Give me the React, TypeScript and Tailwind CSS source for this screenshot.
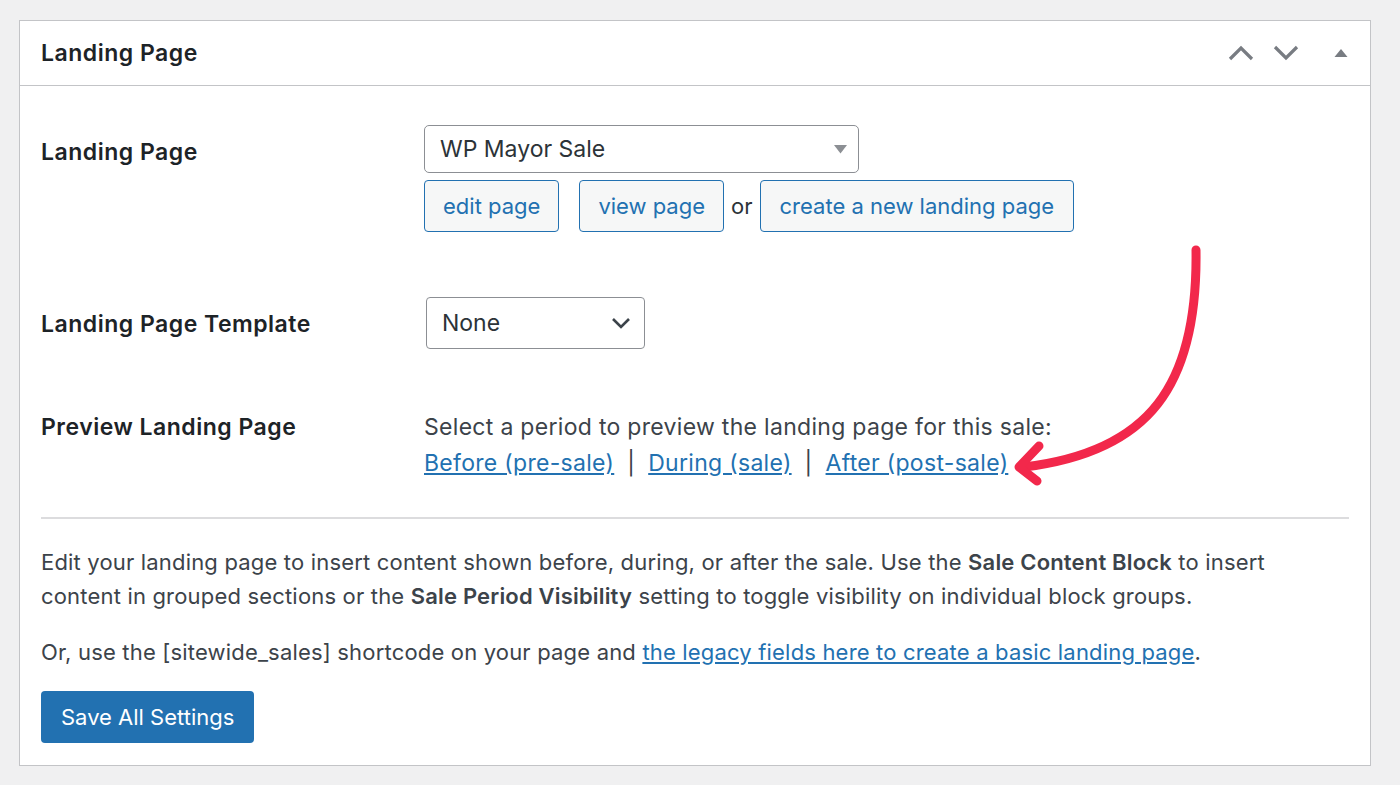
import React from 'react';

const font = { fontFamily: 'Inter, "Noto Sans", sans-serif' };

const ChevronUp = () => (
  <svg width="26" height="16" viewBox="0 0 26 16" fill="none">
    <path d="M2 14 L13 3 L24 14" stroke="#787c82" strokeWidth="3.2" />
  </svg>
);

const ChevronDown = () => (
  <svg width="26" height="16" viewBox="0 0 26 16" fill="none">
    <path d="M2 2 L13 13 L24 2" stroke="#787c82" strokeWidth="3.2" />
  </svg>
);

const Arrow = () => (
  <svg
    className="absolute left-0 top-0 pointer-events-none"
    width="1400"
    height="785"
    viewBox="0 0 1400 785"
    fill="none"
  >
    <path
      d="M1196 250 C1198 385, 1150 452, 1024 467"
      stroke="#f2284b"
      strokeWidth="9"
      strokeLinecap="round"
    />
    <path
      d="M1039 446 L1019 467 L1037 481"
      stroke="#f2284b"
      strokeWidth="9"
      strokeLinecap="round"
      strokeLinejoin="round"
    />
  </svg>
);

const label = 'text-[23px] tracking-[0.5px] font-semibold text-[#1d2327] leading-[30px]';
const btn = 'h-[52px] px-[18px] border border-[#2271b1] rounded-[4px] bg-[#f6f7f7] text-[#2271b1]';

export default function App() {
  return (
    <div className="relative w-[1400px] h-[785px] bg-[#f0f0f1] pt-[20px] pl-[19px]" style={font}>
      <div className="w-[1352px] h-[746px] bg-white border border-[#c3c4c7] flex flex-col">
        {/* Header */}
        <div className="h-[65px] border-b border-[#c3c4c7] flex items-center pl-[21px] pr-[22px]">
          <h2 className={label + ' flex-1'}>Landing Page</h2>
          <div className="flex items-center">
            <ChevronUp />
            <span className="ml-[19px]"><ChevronDown /></span>
            <svg className="ml-[35px]" width="14" height="10" viewBox="0 0 14 10">
              <path d="M7 1 L13.5 9 L0.5 9 Z" fill="#787c82" />
            </svg>
          </div>
        </div>

        {/* Body */}
        <div className="px-[21px] flex flex-col">
          {/* Row 1 */}
          <div className="flex pt-[39px]">
            <div className={label + ' w-[383px] pt-[12px]'}>Landing Page</div>
            <div className="flex flex-col">
              <div className="w-[435px] h-[48px] border border-[#8c8f94] rounded-[5px] flex items-center pl-[15px] pr-[11px] text-[23px] text-[#2c3338]">
                <span className="flex-1">WP Mayor Sale</span>
                <svg width="13" height="9" viewBox="0 0 13 9">
                  <path d="M0 0 L13 0 L6.5 8.5 Z" fill="#8c8f94" />
                </svg>
              </div>
              <div className="flex items-center mt-[7px] text-[22px]">
                <button className={btn}>edit page</button>
                <button className={btn + ' ml-[20px]'}>view page</button>
                <span className="mx-[7px] text-[#2c3338]">or</span>
                <button className={btn + ' px-[19px]'}>create a new landing page</button>
              </div>
            </div>
          </div>

          {/* Row 2 */}
          <div className="flex pt-[65px]">
            <div className={label + ' w-[385px] pt-[12px]'}>Landing Page Template</div>
            <div className="w-[219px] h-[52px] border border-[#8c8f94] rounded-[4px] flex items-center pl-[15px] pr-[13px] text-[23px] text-[#2c3338]">
              <span className="flex-1">None</span>
              <svg width="20" height="12" viewBox="0 0 20 12" fill="none">
                <path d="M2 2 L10 10 L18 2" stroke="#3c434a" strokeWidth="2.6" />
              </svg>
            </div>
          </div>

          {/* Row 3 */}
          <div className="flex pt-[60px]">
            <div className={label + ' w-[383px] pt-[3px]'}>Preview Landing Page</div>
            <div className="text-[23px] tracking-[0.3px] leading-[36px] text-[#3c434a]">
              <div>Select a period to preview the landing page for this sale:</div>
              <div>
                <a className="underline text-[#2271b1]" href="#">Before (pre-sale)</a>
                <span className="mx-[13px]">|</span>
                <a className="underline text-[#2271b1]" href="#">During (sale)</a>
                <span className="mx-[13px]">|</span>
                <a className="underline text-[#2271b1]" href="#">After (post-sale)</a>
              </div>
            </div>
          </div>

          <div className="mt-[36px] h-[2px] bg-[#dcdcde]" />

          <p className="mt-[26px] text-[22px] tracking-[0.18px] leading-[34px] text-[#3c434a]">
            Edit your landing page to insert content shown before, during, or after the sale. Use the{' '}
            <strong className="font-semibold">Sale Content Block</strong> to insert
            <br />
            content in grouped sections or the <strong className="font-semibold">Sale Period Visibility</strong> setting
            to toggle visibility on individual block groups.
          </p>

          <p className="mt-[22px] text-[22px] tracking-[0.18px] leading-[34px] text-[#3c434a]">
            Or, use the [sitewide_sales] shortcode on your page and{' '}
            <a className="underline text-[#2271b1]" href="#">the legacy fields here to create a basic landing page</a>.
          </p>

          <div className="mt-[22px]">
            <button className="h-[52px] px-[20px] rounded-[4px] bg-[#2271b1] text-white text-[22px]">Save All Settings</button>
          </div>
        </div>
      </div>
      <Arrow />
    </div>
  );
}
